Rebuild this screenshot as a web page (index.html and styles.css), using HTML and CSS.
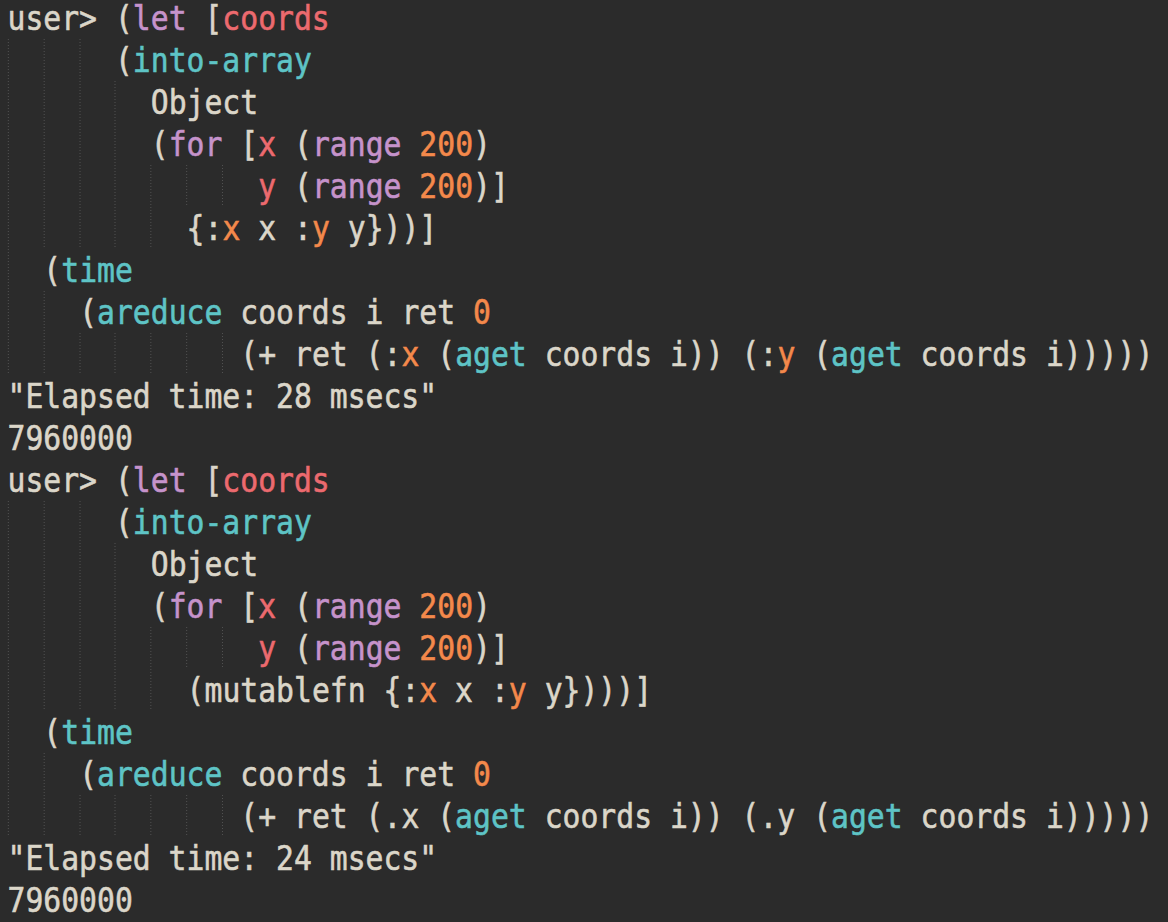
FILE: index.html
```html
<!DOCTYPE html>
<html>
<head>
<meta charset="utf-8">
<link rel="stylesheet" href="styles.css">
</head>
<body>
<div class="repl">
<div class="ln">user&gt; (<span class="kw">let</span> [<span class="bd">coords</span></div>
<div class="ln"><span class="g">  </span><span class="g">  </span><span class="g">  </span>(<span class="fn">into-array</span></div>
<div class="ln"><span class="g">  </span><span class="g">  </span><span class="g">  </span><span class="g">  </span>Object</div>
<div class="ln"><span class="g">  </span><span class="g">  </span><span class="g">  </span><span class="g">  </span>(<span class="kw">for</span> [<span class="bd">x</span> (<span class="kw">range</span> <span class="num">200</span>)</div>
<div class="ln"><span class="g">  </span><span class="g">  </span><span class="g">  </span><span class="g">  </span><span class="g">  </span><span class="g">  </span><span class="g">  </span><span class="bd">y</span> (<span class="kw">range</span> <span class="num">200</span>)]</div>
<div class="ln"><span class="g">  </span><span class="g">  </span><span class="g">  </span><span class="g">  </span><span class="g">  </span>{:<span class="num">x</span> x :<span class="num">y</span> y}))]</div>
<div class="ln"><span class="g">  </span>(<span class="fn">time</span></div>
<div class="ln"><span class="g">  </span><span class="g">  </span>(<span class="fn">areduce</span> coords i ret <span class="num">0</span></div>
<div class="ln"><span class="g">  </span><span class="g">  </span><span class="g">  </span><span class="g">  </span><span class="g">  </span><span class="g">  </span><span class="g"> </span>(+ ret (:<span class="num">x</span> (<span class="fn">aget</span> coords i)) (:<span class="num">y</span> (<span class="fn">aget</span> coords i)))))</div>
<div class="ln">"Elapsed time: 28 msecs"</div>
<div class="ln">7960000</div>
<div class="ln">user&gt; (<span class="kw">let</span> [<span class="bd">coords</span></div>
<div class="ln"><span class="g">  </span><span class="g">  </span><span class="g">  </span>(<span class="fn">into-array</span></div>
<div class="ln"><span class="g">  </span><span class="g">  </span><span class="g">  </span><span class="g">  </span>Object</div>
<div class="ln"><span class="g">  </span><span class="g">  </span><span class="g">  </span><span class="g">  </span>(<span class="kw">for</span> [<span class="bd">x</span> (<span class="kw">range</span> <span class="num">200</span>)</div>
<div class="ln"><span class="g">  </span><span class="g">  </span><span class="g">  </span><span class="g">  </span><span class="g">  </span><span class="g">  </span><span class="g">  </span><span class="bd">y</span> (<span class="kw">range</span> <span class="num">200</span>)]</div>
<div class="ln"><span class="g">  </span><span class="g">  </span><span class="g">  </span><span class="g">  </span><span class="g">  </span>(mutablefn {:<span class="num">x</span> x :<span class="num">y</span> y})))]</div>
<div class="ln"><span class="g">  </span>(<span class="fn">time</span></div>
<div class="ln"><span class="g">  </span><span class="g">  </span>(<span class="fn">areduce</span> coords i ret <span class="num">0</span></div>
<div class="ln"><span class="g">  </span><span class="g">  </span><span class="g">  </span><span class="g">  </span><span class="g">  </span><span class="g">  </span><span class="g"> </span>(+ ret (.x (<span class="fn">aget</span> coords i)) (.y (<span class="fn">aget</span> coords i)))))</div>
<div class="ln">"Elapsed time: 24 msecs"</div>
<div class="ln">7960000</div>
</div>
</body>
</html>
```

FILE: styles.css
```css
html, body {
  margin: 0;
  padding: 0;
  background: #2b2b2b;
  overflow: hidden;
}

.repl {
  margin-top: -3px;
  padding-left: 8.6px;
  font-family: "DejaVu Sans Mono", monospace;
  font-size: 34px;
  line-height: 42px;
  color: #dbd6c9;
  -webkit-text-stroke: 0.6px currentColor;
  transform: scaleX(0.8745);
  transform-origin: 0 0;
  width: 1300px;
}

.ln {
  height: 42px;
  white-space: pre;
}

.g {
  display: inline-block;
  height: 42px;
  vertical-align: top;
  background-image: linear-gradient(#565656 50%, transparent 50%);
  background-size: 1.4px 3px;
  background-repeat: repeat-y;
  background-position: 0 0;
}

.kw { color: #c693cb; }
.bd { color: #ec6a6f; }
.fn { color: #5ec4c6; }
.num { color: #f4894b; }
```
